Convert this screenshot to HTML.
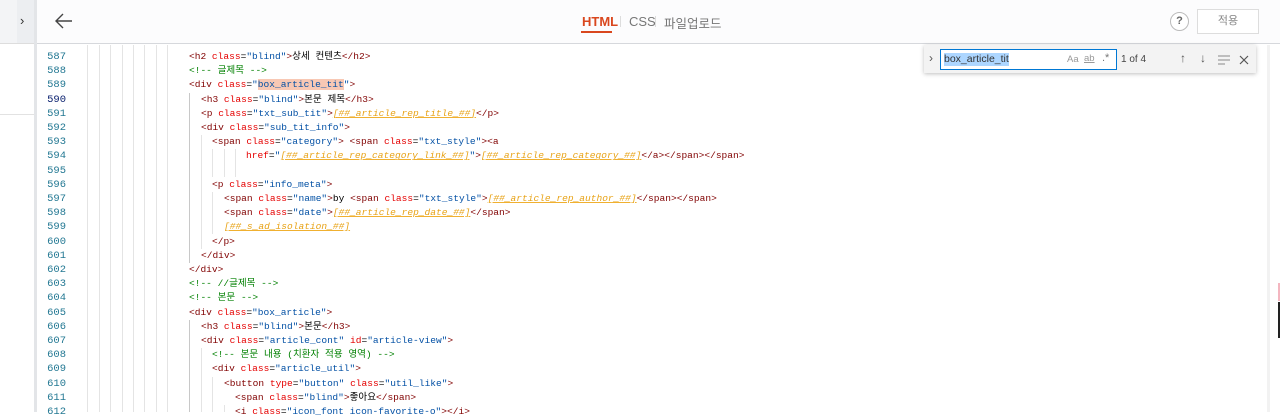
<!DOCTYPE html>
<html><head><meta charset="utf-8"><style>
*{margin:0;padding:0;box-sizing:border-box}
body{width:1280px;height:412px;overflow:hidden;background:#fff;position:relative;font-family:"Liberation Sans","Noto Sans CJK KR",sans-serif}
.abs{position:absolute}
.code{position:absolute;left:0;font-family:"Liberation Mono","Noto Sans CJK KR",monospace;font-size:9.55px;white-space:pre;line-height:14.2px;height:14.2px}
.ln{position:absolute;width:66px;text-align:right;left:0;font-family:"Liberation Mono",monospace;font-size:10.5px;color:#237893;line-height:14.2px}
.t{color:#800000}.a{color:#e50000}.v{color:#0451a5}.c{color:#008000}.k{color:#000}
.p{color:#e8a317;font-style:italic;text-decoration:underline;text-decoration-color:#f0b030}
.g{position:absolute;width:1px;background:#e4e4e4}
.ig{position:absolute;width:1px;background:#c8c8c8}
</style></head><body>
<div class="abs" style="left:0;top:0;width:17px;height:44px;background:#f3f4f6"></div>
<div class="abs" style="left:17px;top:0;width:17px;height:44px;background:#eceef1"></div>
<div class="abs" style="left:20px;top:13px;font-size:13px;color:#333">&#8250;</div>
<div class="abs" style="left:0;top:43px;width:34px;height:1px;background:#ddd"></div>
<div class="abs" style="left:0;top:114px;width:34px;height:1px;background:#e2e2e2"></div>
<div class="abs" style="left:34px;top:0;width:3px;height:412px;background:#e3e5e8"></div>
<div class="abs" style="left:37px;top:0;width:1243px;height:44px;background:#fcfcfd;border-bottom:1px solid #d6d8dc"></div>
<svg class="abs" style="left:54px;top:12px" width="20" height="18" viewBox="0 0 20 18"><path d="M18 9H2M9 2L2 9l7 7" fill="none" stroke="#444" stroke-width="1.4"/></svg>
<div class="abs" style="left:582px;top:14px;font-size:13px;font-weight:bold;color:#d9471e">HTML</div>
<div class="abs" style="left:581px;top:31px;width:31px;height:2px;background:#d9471e"></div>
<div class="abs" style="left:620px;top:16px;width:1px;height:11px;background:#ddd"></div>
<div class="abs" style="left:629px;top:14px;font-size:13px;color:#777">CSS</div>
<div class="abs" style="left:655px;top:16px;width:1px;height:11px;background:#ddd"></div>
<div class="abs" style="left:664px;top:13px;font-size:12.5px;color:#777">파일업로드</div>
<div class="abs" style="left:1170px;top:12px;width:19px;height:19px;border:1px solid #bbb;border-radius:50%;background:#fff;font-size:11px;font-weight:bold;color:#666;text-align:center;line-height:17px">?</div>
<div class="abs" style="left:1197px;top:9px;width:62px;height:25px;border:1px solid #ddd;background:#fff;font-size:11px;color:#888;text-align:center;line-height:23px">적용</div>
<div class="abs" style="left:1267px;top:45px;width:3px;height:367px;background:#f2f2f2"></div>
<div class="abs" style="left:1278px;top:283px;width:2px;height:18px;background:#f4b6c0"></div>
<div class="abs" style="left:1278px;top:302px;width:2px;height:36px;background:#222"></div>
<div class="g" style="left:87px;top:45px;height:367px"></div>
<div class="g" style="left:99px;top:45px;height:367px"></div>
<div class="g" style="left:110px;top:45px;height:367px"></div>
<div class="g" style="left:122px;top:45px;height:367px"></div>
<div class="g" style="left:133px;top:45px;height:367px"></div>
<div class="g" style="left:144px;top:45px;height:367px"></div>
<div class="g" style="left:156px;top:45px;height:367px"></div>
<div class="g" style="left:167px;top:45px;height:367px"></div>
<div class="ig" style="left:189px;top:93px;height:170px"></div>
<div class="g" style="left:201px;top:135px;height:114px"></div>
<div class="g" style="left:212px;top:149px;height:28px"></div>
<div class="g" style="left:224px;top:149px;height:28px"></div>
<div class="g" style="left:235px;top:149px;height:28px"></div>
<div class="g" style="left:212px;top:192px;height:42px"></div>
<div class="ig" style="left:189px;top:320px;height:92px"></div>
<div class="g" style="left:201px;top:348px;height:64px"></div>
<div class="g" style="left:212px;top:377px;height:35px"></div>
<div class="g" style="left:224px;top:405px;height:7px"></div>
<div style="position:absolute;left:0;top:50px">
<div class="ln" style="top:0">587</div><div class="code" style="top:0;left:189px"><span class="t">&lt;h2</span> <span class="a">class</span>=<span class="v">"blind"</span><span class="t">&gt;</span>상세 컨텐츠<span class="t">&lt;/h2&gt;</span></div>
<div class="ln" style="top:14.2px">588</div><div class="code c" style="top:14.2px;left:189px">&lt;!-- 글제목 --&gt;</div>
<div class="ln" style="top:28.4px">589</div><div class="code" style="top:28.4px;left:189px"><span class="t">&lt;div</span> <span class="a">class</span>=<span class="v">"<span style="background:#f8c8b4">box_article_tit</span>"</span><span class="t">&gt;</span></div>
<div class="ln" style="top:42.6px;color:#0b216f">590</div><div class="code" style="top:42.6px;left:201px"><span class="t">&lt;h3</span> <span class="a">class</span>=<span class="v">"blind"</span><span class="t">&gt;</span>본문 제목<span class="t">&lt;/h3&gt;</span></div>
<div class="ln" style="top:56.8px">591</div><div class="code" style="top:56.8px;left:201px"><span class="t">&lt;p</span> <span class="a">class</span>=<span class="v">"txt_sub_tit"</span><span class="t">&gt;</span><span class="p">[##_article_rep_title_##]</span><span class="t">&lt;/p&gt;</span></div>
<div class="ln" style="top:71px">592</div><div class="code" style="top:71px;left:201px"><span class="t">&lt;div</span> <span class="a">class</span>=<span class="v">"sub_tit_info"</span><span class="t">&gt;</span></div>
<div class="ln" style="top:85.2px">593</div><div class="code" style="top:85.2px;left:212px"><span class="t">&lt;span</span> <span class="a">class</span>=<span class="v">"category"</span><span class="t">&gt;</span> <span class="t">&lt;span</span> <span class="a">class</span>=<span class="v">"txt_style"</span><span class="t">&gt;&lt;a</span></div>
<div class="ln" style="top:99.4px">594</div><div class="code" style="top:99.4px;left:246px"><span class="a">href</span>=<span class="v">"</span><span class="p">[##_article_rep_category_link_##]</span><span class="v">"</span><span class="t">&gt;</span><span class="p">[##_article_rep_category_##]</span><span class="t">&lt;/a&gt;&lt;/span&gt;&lt;/span&gt;</span></div>
<div class="ln" style="top:113.6px">595</div>
<div class="ln" style="top:127.8px">596</div><div class="code" style="top:127.8px;left:212px"><span class="t">&lt;p</span> <span class="a">class</span>=<span class="v">"info_meta"</span><span class="t">&gt;</span></div>
<div class="ln" style="top:142px">597</div><div class="code" style="top:142px;left:224px"><span class="t">&lt;span</span> <span class="a">class</span>=<span class="v">"name"</span><span class="t">&gt;</span>by <span class="t">&lt;span</span> <span class="a">class</span>=<span class="v">"txt_style"</span><span class="t">&gt;</span><span class="p">[##_article_rep_author_##]</span><span class="t">&lt;/span&gt;&lt;/span&gt;</span></div>
<div class="ln" style="top:156.2px">598</div><div class="code" style="top:156.2px;left:224px"><span class="t">&lt;span</span> <span class="a">class</span>=<span class="v">"date"</span><span class="t">&gt;</span><span class="p">[##_article_rep_date_##]</span><span class="t">&lt;/span&gt;</span></div>
<div class="ln" style="top:170.4px">599</div><div class="code" style="top:170.4px;left:224px"><span class="p">[##_s_ad_isolation_##]</span></div>
<div class="ln" style="top:184.6px">600</div><div class="code" style="top:184.6px;left:212px"><span class="t">&lt;/p&gt;</span></div>
<div class="ln" style="top:198.8px">601</div><div class="code" style="top:198.8px;left:201px"><span class="t">&lt;/div&gt;</span></div>
<div class="ln" style="top:213px">602</div><div class="code" style="top:213px;left:189px"><span class="t">&lt;/div&gt;</span></div>
<div class="ln" style="top:227.2px">603</div><div class="code c" style="top:227.2px;left:189px">&lt;!-- //글제목 --&gt;</div>
<div class="ln" style="top:241.4px">604</div><div class="code c" style="top:241.4px;left:189px">&lt;!-- 본문 --&gt;</div>
<div class="ln" style="top:255.6px">605</div><div class="code" style="top:255.6px;left:189px"><span class="t">&lt;div</span> <span class="a">class</span>=<span class="v">"box_article"</span><span class="t">&gt;</span></div>
<div class="ln" style="top:269.8px">606</div><div class="code" style="top:269.8px;left:201px"><span class="t">&lt;h3</span> <span class="a">class</span>=<span class="v">"blind"</span><span class="t">&gt;</span>본문<span class="t">&lt;/h3&gt;</span></div>
<div class="ln" style="top:284px">607</div><div class="code" style="top:284px;left:201px"><span class="t">&lt;div</span> <span class="a">class</span>=<span class="v">"article_cont"</span> <span class="a">id</span>=<span class="v">"article-view"</span><span class="t">&gt;</span></div>
<div class="ln" style="top:298.2px">608</div><div class="code c" style="top:298.2px;left:212px">&lt;!-- 본문 내용 (치환자 적용 영역) --&gt;</div>
<div class="ln" style="top:312.4px">609</div><div class="code" style="top:312.4px;left:212px"><span class="t">&lt;div</span> <span class="a">class</span>=<span class="v">"article_util"</span><span class="t">&gt;</span></div>
<div class="ln" style="top:326.6px">610</div><div class="code" style="top:326.6px;left:224px"><span class="t">&lt;button</span> <span class="a">type</span>=<span class="v">"button"</span> <span class="a">class</span>=<span class="v">"util_like"</span><span class="t">&gt;</span></div>
<div class="ln" style="top:340.8px">611</div><div class="code" style="top:340.8px;left:235px"><span class="t">&lt;span</span> <span class="a">class</span>=<span class="v">"blind"</span><span class="t">&gt;</span>좋아요<span class="t">&lt;/span&gt;</span></div>
<div class="ln" style="top:355px">612</div><div class="code" style="top:355px;left:235px"><span class="t">&lt;i</span> <span class="a">class</span>=<span class="v">"icon_font icon-favorite-o"</span><span class="t">&gt;&lt;/i&gt;</span></div>
</div>
<div class="abs" style="left:924px;top:45px;width:332px;height:28px;background:#f3f3f3;box-shadow:0 1px 4px rgba(0,0,0,.25)"></div>
<div class="abs" style="left:929px;top:51px;font-size:12px;color:#555">&#8250;</div>
<div class="abs" style="left:940px;top:49px;width:177px;height:21px;border:1px solid #0078d4;background:#fff"></div>
<div class="abs" style="left:944px;top:53px;font-size:10.5px;color:#333;background:#add6ff;line-height:13px">box_article_tit</div>
<div class="abs" style="left:1067px;top:54px;font-size:9.5px;color:#999">Aa</div>
<div class="abs" style="left:1084px;top:53px;font-size:9.5px;color:#999;text-decoration:underline">ab</div>
<div class="abs" style="left:1102px;top:52px;font-size:11px;color:#777">.*</div>
<div class="abs" style="left:1121px;top:54px;font-size:10px;color:#444">1 of 4</div>
<div class="abs" style="left:1180px;top:51px;font-size:12px;color:#555">&#8593;</div>
<div class="abs" style="left:1200px;top:51px;font-size:12px;color:#555">&#8595;</div>
<svg class="abs" style="left:1218px;top:55px" width="12" height="10"><path d="M0 1h12M0 5h12M0 9h7" stroke="#888" stroke-width="1"/></svg>
<svg class="abs" style="left:1239px;top:55px" width="10" height="10"><path d="M1 1l8 8M9 1l-8 8" stroke="#555" stroke-width="1.2"/></svg>
</body></html>
